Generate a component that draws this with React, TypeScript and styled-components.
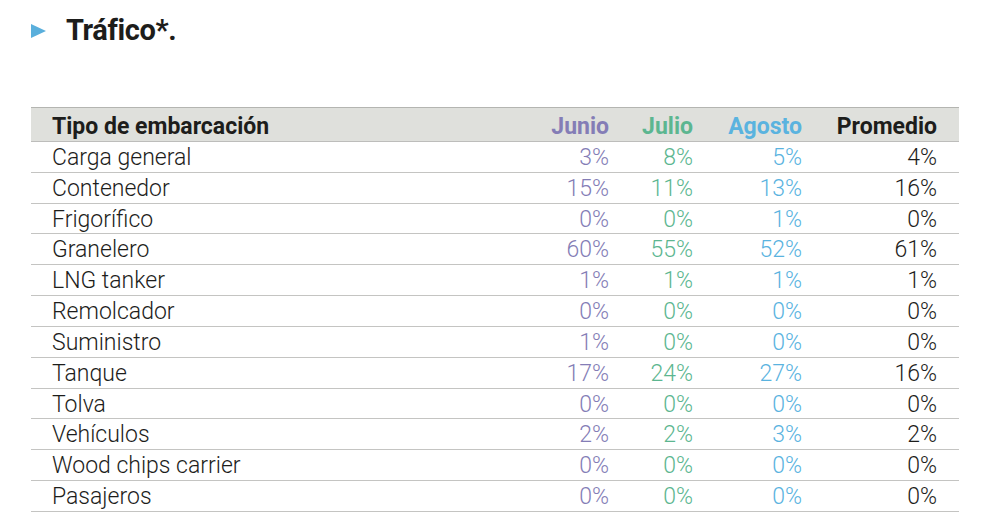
import React from "react";
import styled, { createGlobalStyle } from "styled-components";

const GlobalStyle = createGlobalStyle`
  html, body {
    margin: 0;
    padding: 0;
    background: #ffffff;
  }
  body {
    font-family: Roboto, "Liberation Sans", sans-serif;
    color: #1d1d1b;
  }
`;

const Page = styled.div`
  width: 981px;
  height: 527px;
  padding: 15px 21px 0 31px;
  box-sizing: border-box;
`;

const TitleRow = styled.div`
  display: flex;
  align-items: center;
  gap: 20px;
  height: 30px;
`;

const Arrow = styled.span`
  width: 0;
  height: 0;
  border-top: 7px solid transparent;
  border-bottom: 7px solid transparent;
  border-left: 15px solid #5aafdc;
  margin-top: 2px;
`;

const Title = styled.h1`
  margin: 0;
  font-size: 29px;
  font-weight: 700;
  line-height: 30px;
  letter-spacing: -0.4px;
  color: #1d1d1b;
`;

const Table = styled.div`
  margin-top: 62px;
  width: 928px;
`;

const cols = "1fr 90px 84px 109px 135px";

const HeadRow = styled.div`
  display: grid;
  grid-template-columns: ${cols};
  align-items: center;
  height: 35px;
  box-sizing: border-box;
  padding: 3px 22px 0 21px;
  background: #dfe0dc;
  border-top: 1px solid #b4b5b1;
  border-bottom: 1px solid #bdbdbb;
  font-size: 23px;
  font-weight: 700;
`;

const Row = styled.div`
  display: grid;
  grid-template-columns: ${cols};
  align-items: center;
  height: 30.83px;
  box-sizing: border-box;
  padding: 1px 22px 0 21px;
  border-bottom: 1px solid #c4c4c2;
  font-size: 23px;
  font-weight: 300;
`;

const Cell = styled.span<{ tone?: string; right?: boolean }>`
  color: ${(p) => p.tone ?? "#1d1d1b"};
  text-align: ${(p) => (p.right ? "right" : "left")};
  white-space: nowrap;
`;

const tones = {
  junio: "#847db6",
  julio: "#5cb690",
  agosto: "#5ab3df",
  promedio: "#1d1d1b",
};

type Traffic = [string, string, string, string, string];

const rows: Traffic[] = [
  ["Carga general", "3%", "8%", "5%", "4%"],
  ["Contenedor", "15%", "11%", "13%", "16%"],
  ["Frigorífico", "0%", "0%", "1%", "0%"],
  ["Granelero", "60%", "55%", "52%", "61%"],
  ["LNG tanker", "1%", "1%", "1%", "1%"],
  ["Remolcador", "0%", "0%", "0%", "0%"],
  ["Suministro", "1%", "0%", "0%", "0%"],
  ["Tanque", "17%", "24%", "27%", "16%"],
  ["Tolva", "0%", "0%", "0%", "0%"],
  ["Vehículos", "2%", "2%", "3%", "2%"],
  ["Wood chips carrier", "0%", "0%", "0%", "0%"],
  ["Pasajeros", "0%", "0%", "0%", "0%"],
];

const App = () => (
  <>
    <GlobalStyle />
    <Page>
      <TitleRow>
        <Arrow />
        <Title>Tráfico*.</Title>
      </TitleRow>
      <Table>
        <HeadRow>
          <Cell>Tipo de embarcación</Cell>
          <Cell right tone={tones.junio}>Junio</Cell>
          <Cell right tone={tones.julio}>Julio</Cell>
          <Cell right tone={tones.agosto}>Agosto</Cell>
          <Cell right tone={tones.promedio}>Promedio</Cell>
        </HeadRow>
        {rows.map(([name, jun, jul, ago, prom]) => (
          <Row key={name}>
            <Cell>{name}</Cell>
            <Cell right tone={tones.junio}>{jun}</Cell>
            <Cell right tone={tones.julio}>{jul}</Cell>
            <Cell right tone={tones.agosto}>{ago}</Cell>
            <Cell right tone={tones.promedio}>{prom}</Cell>
          </Row>
        ))}
      </Table>
    </Page>
  </>
);

export default App;
